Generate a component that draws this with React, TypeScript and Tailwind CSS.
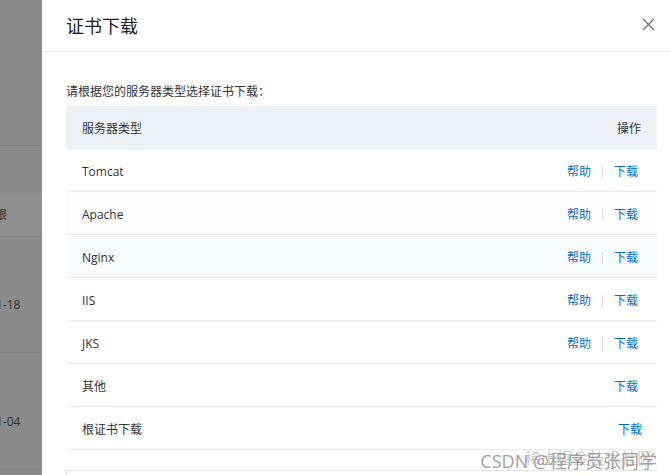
import React from "react";

const rows: { name: string; help: boolean; bg?: string }[] = [
  { name: "Tomcat", help: true },
  { name: "Apache", help: true, bg: "bg-[#fcfcfd]" },
  { name: "Nginx", help: true, bg: "bg-[#f9fafc]" },
  { name: "IIS", help: true },
  { name: "JKS", help: true },
  { name: "其他", help: false },
];

const font = { fontFamily: '"Open Sans", "Noto Sans CJK SC", sans-serif' };

export default function App() {
  return (
    <div className="flex h-[475px] w-[670px] overflow-hidden bg-white text-[#333]" style={font}>
      {/* masked background page */}
      <div className="flex w-[42px] shrink-0 flex-col overflow-hidden bg-[#8b8b8b] text-[12px] text-[#2e2e2e]">
        <div className="h-[146px] shrink-0 border-b border-[#838383]" />
        <div className="h-[48px] shrink-0" />
        <div className="flex h-[43px] shrink-0 items-center border-b border-[#838383] bg-[#8f8f8f]">
          <span className="-ml-[5px] whitespace-nowrap">限</span>
        </div>
        <div className="h-[116px] shrink-0 border-b border-[#838383] pt-[59px]">
          <span className="-ml-[4px] whitespace-nowrap">1-18</span>
        </div>
        <div className="h-[117px] shrink-0 border-b border-[#838383] pt-[60px]">
          <span className="-ml-[4px] whitespace-nowrap">1-04</span>
        </div>
      </div>

      {/* drawer */}
      <div className="flex min-w-0 flex-1 flex-col bg-white">
        <div className="flex h-[52px] shrink-0 items-center justify-between border-b border-[#e6e6e6] pl-[24px] pr-[15px]">
          <span className="text-[18px] leading-none text-[#222]">证书下载</span>
          <svg width="13" height="13" viewBox="0 0 13 13" className="mt-[-2px]">
            <path d="M1 1 L12 12 M12 1 L1 12" stroke="#666" strokeWidth="1.1" />
          </svg>
        </div>

        <div className="flex flex-col pl-[24px] pr-[13px]">
          <div className="flex h-[54px] items-end pb-[8px] text-[12px] leading-none">
            请根据您的服务器类型选择证书下载：
          </div>
          <div className="flex flex-col text-[12px]">
            <div className="flex h-[43px] items-center justify-between border-b border-[#e3e7ec] bg-[#eef2f6] pl-[16px] pr-[16px] pt-[3px]">
              <span>服务器类型</span>
              <span>操作</span>
            </div>
            {rows.map((r) => (
              <div
                key={r.name}
                className={`flex h-[43px] items-center justify-between border-b border-[#e8e8e8] pl-[16px] pr-[19px] pt-[3px] ${r.bg ?? ""}`}
              >
                <span>{r.name}</span>
                <span className="flex items-center text-[#0070cc]">
                  {r.help && (
                    <>
                      <span>帮助</span>
                      <span className="mx-[11px] h-[12px] w-px bg-[#dcdcdc]" />
                    </>
                  )}
                  <span>下载</span>
                </span>
              </div>
            ))}
            <div className="flex h-[43px] items-center justify-between border-b border-[#e8e8e8] pl-[16px] pr-[15px] pt-[3px]">
              <span>根证书下载</span>
              <span className="text-[#0070cc]">下载</span>
            </div>
          </div>
          <div className="relative mt-[20px] h-[20px] border-l border-t border-[#e3e3e3]">
            <span className="absolute -top-[19px] right-[0px] whitespace-nowrap text-[18px] leading-none text-[#8a8a8a] opacity-80">
              CSDN @程序员张同学
            </span>
            <span className="absolute -top-[21px] right-[4px] whitespace-nowrap text-[16px] leading-none text-[#9a9a9a] opacity-50">
              稀土掘金技术社区
            </span>
          </div>
        </div>
      </div>
    </div>
  );
}
